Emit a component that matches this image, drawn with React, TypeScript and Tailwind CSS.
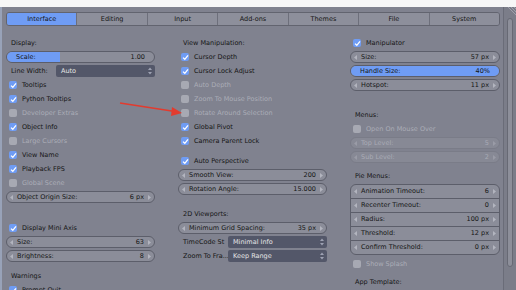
import React from "react";

type Row =
  | { kind: "label"; text: string; gap?: string }
  | { kind: "check"; text: string; on?: boolean; dim?: boolean; gap?: string }
  | { kind: "num"; text: string; value: string; dim?: boolean; gap?: string }
  | { kind: "slider"; text: string; value: string; fill: number; gap?: string }
  | { kind: "drop"; text: string; value: string; gap?: string };

const col1: Row[] = [
  { kind: "label", text: "Display:" },
  { kind: "slider", text: "Scale:", value: "1.00", fill: 36 },
  { kind: "drop", text: "Line Width:", value: "Auto" },
  { kind: "check", text: "Tooltips", on: true },
  { kind: "check", text: "Python Tooltips", on: true },
  { kind: "check", text: "Developer Extras", dim: true },
  { kind: "check", text: "Object Info", on: true },
  { kind: "check", text: "Large Cursors", dim: true },
  { kind: "check", text: "View Name", on: true },
  { kind: "check", text: "Playback FPS", on: true },
  { kind: "check", text: "Global Scene", dim: true },
  { kind: "num", text: "Object Origin Size:", value: "6 px" },
  { kind: "check", text: "Display Mini Axis", on: true, gap: "mt-[17px]" },
  { kind: "num", text: "Size:", value: "63" },
  { kind: "num", text: "Brightness:", value: "8" },
  { kind: "label", text: "Warnings", gap: "mt-[6px]" },
  { kind: "check", text: "Prompt Quit", on: true },
];

const col2: Row[] = [
  { kind: "label", text: "View Manipulation:" },
  { kind: "check", text: "Cursor Depth", on: true },
  { kind: "check", text: "Cursor Lock Adjust", on: true },
  { kind: "check", text: "Auto Depth", dim: true },
  { kind: "check", text: "Zoom To Mouse Position", dim: true },
  { kind: "check", text: "Rotate Around Selection", dim: true },
  { kind: "check", text: "Global Pivot", on: true },
  { kind: "check", text: "Camera Parent Lock", on: true },
  { kind: "check", text: "Auto Perspective", on: true, gap: "mt-[6px]" },
  { kind: "num", text: "Smooth View:", value: "200" },
  { kind: "num", text: "Rotation Angle:", value: "15.000" },
  { kind: "label", text: "2D Viewports:", gap: "mt-[11px]" },
  { kind: "num", text: "Minimum Grid Spacing:", value: "35 px" },
  { kind: "drop", text: "TimeCode St", value: "Minimal Info" },
  { kind: "drop", text: "Zoom To Fra...", value: "Keep Range" },
];

const tabs = ["Interface", "Editing", "Input", "Add-ons", "Themes", "File", "System"];

const pie = [
  ["Animation Timeout:", "6"],
  ["Recenter Timeout:", "0"],
  ["Radius:", "100 px"],
  ["Threshold:", "12 px"],
  ["Confirm Threshold:", "0 px"],
];

const Arrows = ({ dim }: { dim?: boolean }) => null;

const Tri = ({ right, dim }: { right?: boolean; dim?: boolean }) => (
  <svg width="3" height="5" viewBox="0 0 3 5" className="shrink-0">
    <path
      d={right ? "M0 0 L3 2.5 L0 5 Z" : "M3 0 L0 2.5 L3 5 Z"}
      fill={dim ? "#9a9ca7" : "#b3b5bf"}
    />
  </svg>
);

const Check = ({ text, on, dim }: { text: string; on?: boolean; dim?: boolean }) => (
  <div className="flex h-[14px] items-center pl-[3px]">
    <div
      className={
        "flex h-[8px] w-[8px] items-center justify-center rounded-[2px] " +
        (on ? "bg-[#6f9cf4]" : "bg-[#a7a9b3]")
      }
    >
      {on && (
        <svg width="7" height="7" viewBox="0 0 7 7">
          <path d="M1 3.6 L2.8 5.3 L6 1.4" stroke="white" strokeWidth="1.3" fill="none" />
        </svg>
      )}
    </div>
    <span className={"ml-[5px] " + (dim ? "text-[#abadb7]" : "text-[#151515]")}>{text}</span>
  </div>
);

const Num = ({
  text,
  value,
  dim,
  shape = "rounded-[6px]",
}: {
  text: string;
  value: string;
  dim?: boolean;
  shape?: string;
}) => (
  <div
    className={
      "flex h-[12px] items-center border px-[3px] " +
      shape +
      (dim ? " border-[#7a7c88] bg-[#878995] text-[#a9abb5]" : " border-[#5c5e6a] bg-[#8b8d99] text-[#151515]")
    }
  >
    <Tri dim={dim} />
    <span className="ml-[4px] flex-1">{text}</span>
    <span className="mr-[4px]">{value}</span>
    <Tri right dim={dim} />
  </div>
);

const Slider = ({ text, value, fill }: { text: string; value: string; fill: number }) => (
  <div className="relative flex h-[12px] items-center overflow-hidden rounded-[6px] border border-[#5c5e6a] bg-[#8b8d99] px-[9px] text-[#151515]">
    <div className="absolute inset-y-0 left-0 bg-[#6f9cf4]" style={{ width: `${fill}%` }} />
    <span className="relative flex-1">{text}</span>
    <span className="relative">{value}</span>
  </div>
);

const Drop = ({ text, value }: { text: string; value: string }) => (
  <div className="flex h-[14px] items-center">
    <span className="w-[50px] pl-[5px] text-[#151515] whitespace-nowrap overflow-hidden">{text}</span>
    <div className="flex h-[12px] flex-1 items-center rounded-[2px] bg-[#535769] pl-[5px] pr-[3px] text-[#e6e6e6]">
      <span className="flex-1">{value}</span>
      <svg width="4" height="8" viewBox="0 0 4 8">
        <path d="M0 3 L2 0.5 L4 3 Z M0 5 L2 7.5 L4 5 Z" fill="#9ea2b3" />
      </svg>
    </div>
  </div>
);

const Item = ({ r }: { r: Row }) => {
  const gap = r.gap ?? "";
  if (r.kind === "label")
    return (
      <div className={"flex h-[14px] items-center pl-[5px] text-[#151515] " + gap}>{r.text}</div>
    );
  if (r.kind === "check")
    return (
      <div className={gap}>
        <Check text={r.text} on={r.on} dim={r.dim} />
      </div>
    );
  if (r.kind === "num")
    return (
      <div className={"flex h-[14px] items-center " + gap}>
        <div className="w-full">
          <Num text={r.text} value={r.value} dim={r.dim} />
        </div>
      </div>
    );
  if (r.kind === "slider")
    return (
      <div className={"flex h-[14px] items-center " + gap}>
        <div className="w-full">
          <Slider text={r.text} value={r.value} fill={r.fill} />
        </div>
      </div>
    );
  return (
    <div className={gap}>
      <Drop text={r.text} value={r.value} />
    </div>
  );
};

export default function App() {
  return (
    <div className="relative h-[290px] w-[516px] overflow-hidden bg-[#f7f7f7] font-['DejaVu_Sans',sans-serif] text-[6.5px] leading-none">
      <div className="h-[7px]" />
      <div className="flex h-[283px] border-l-2 border-[#98a2b8] bg-[#80828f]">
        <div className="w-[501px] pl-[4px] pt-[5px]">
          {/* tab bar */}
          <div className="flex h-[14px] w-[494px] overflow-hidden rounded-[3px] border border-[#62646f]">
            {tabs.map((t, i) => (
              <div
                key={t}
                className={
                  "flex flex-1 items-center justify-center " +
                  (i > 0 ? "border-l border-[#6d6f7b] " : "") +
                  (i === 0 ? "bg-[#6f9cf4] text-[#151515]" : "bg-[#8d8f9b] text-[#151515]")
                }
              >
                {t}
              </div>
            ))}
          </div>

          <div className="mt-[10px] flex gap-[23px]">
            <div className="w-[149px]">
              {col1.map((r) => (
                <Item key={r.text} r={r} />
              ))}
            </div>
            <div className="w-[149px]">
              {col2.map((r) => (
                <Item key={r.text} r={r} />
              ))}
            </div>
            <div className="w-[150px]">
              <Check text="Manipulator" on />
              <div className="flex h-[14px] items-center">
                <div className="w-full">
                  <Num text="Size:" value="57 px" />
                </div>
              </div>
              <div className="flex h-[14px] items-center">
                <div className="w-full">
                  <Slider text="Handle Size:" value="40%" fill={100} />
                </div>
              </div>
              <div className="flex h-[14px] items-center">
                <div className="w-full">
                  <Num text="Hotspot:" value="11 px" />
                </div>
              </div>

              <div className="mt-[16px] flex h-[14px] items-center pl-[5px] text-[#151515]">Menus:</div>
              <Check text="Open On Mouse Over" dim />
              <div className="flex h-[14px] items-center">
                <div className="w-full">
                  <Num text="Top Level:" value="5" dim />
                </div>
              </div>
              <div className="flex h-[14px] items-center">
                <div className="w-full">
                  <Num text="Sub Level:" value="2" dim />
                </div>
              </div>

              <div className="mt-[5px] flex h-[14px] items-center pl-[5px] text-[#151515]">Pie Menus:</div>
              <div className="mt-[1px] flex flex-col">
                {pie.map(([t, v], i) => (
                  <div key={t} className={i > 0 ? "-mt-px" : ""}>
                    <div className="h-[15px]">
                      <Num
                        text={t}
                        value={v}
                        shape={
                          (i === 0 ? "rounded-t-[6px] " : "") +
                          (i === pie.length - 1 ? "rounded-b-[6px] " : "") +
                          "!h-[15px]"
                        }
                      />
                    </div>
                  </div>
                ))}
              </div>
              <div className="mt-[2px]">
                <Check text="Show Splash" dim />
              </div>
              <div className="mt-[4px] flex h-[14px] items-center pl-[5px] text-[#151515]">App Template:</div>
            </div>
          </div>
        </div>

        {/* scroll strip */}
        <div className="relative flex-1 border-l border-[#6a6c78] bg-[#7b7d89] pl-[3px] pt-[5px]">
          <svg width="9" height="9" viewBox="0 0 9 9" className="absolute right-0 top-0">
            <path d="M1 0 L9 8 M4 0 L9 5 M7 0 L9 2" stroke="#a9abb5" strokeWidth="0.8" />
          </svg>
          <div className="mt-[6px] h-[249px] w-[6px] rounded-full border border-[#676974] bg-[#8d8f9a]" />
        </div>
      </div>

      {/* red pointer arrow */}
      <svg width="516" height="290" className="pointer-events-none absolute left-0 top-0">
        <line x1="120" y1="103" x2="175" y2="111.5" stroke="#e23b2e" strokeWidth="1.6" />
        <path d="M182 113 L172 107 L171 116 Z" fill="#e23b2e" />
      </svg>
    </div>
  );
}
